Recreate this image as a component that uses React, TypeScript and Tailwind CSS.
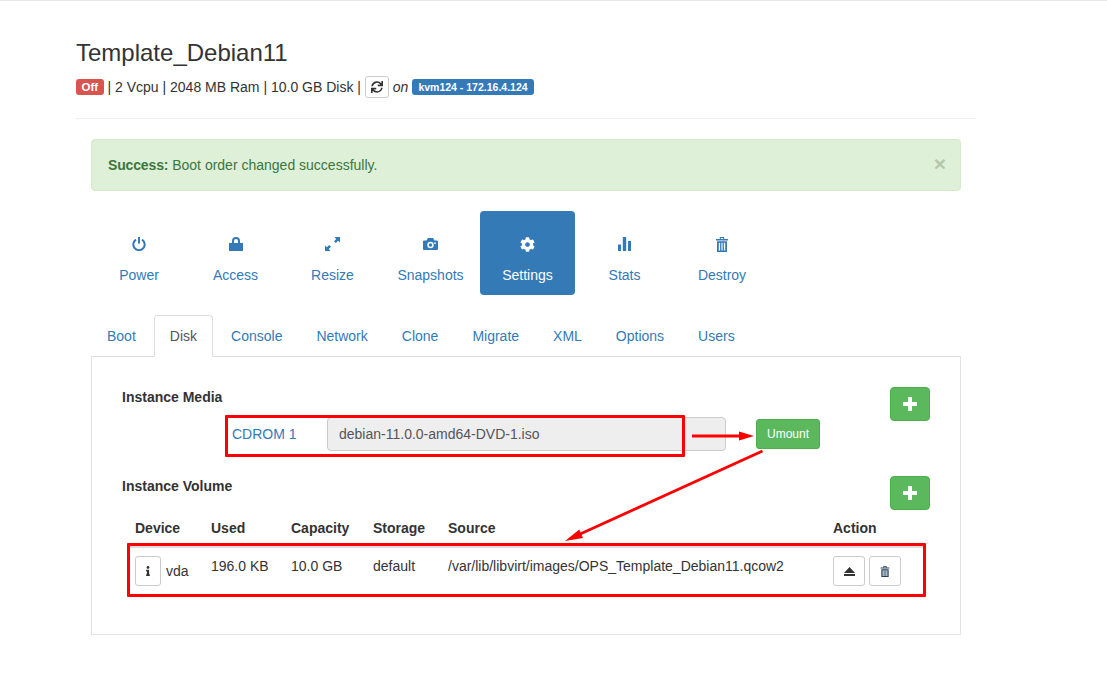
import { FaCog, FaInfo, FaSync } from 'react-icons/fa'
import type { ReactNode } from 'react'

const PowerIcon = () => (
  <svg viewBox="0 0 14 14" className="h-[14px] w-[14px]" fill="none" stroke="currentColor" strokeWidth="2">
    <path d="M4 2.600a5.700 5.700 0 1 0 6 0" />
    <path d="M7 0v6.500" />
  </svg>
)

const LockIcon = () => (
  <svg viewBox="0 0 14 14" className="h-[14px] w-[14px]" fill="currentColor">
    <path d="M0 6h14v8H0z" />
    <path d="M3 6.500V4a4 4 0 0 1 8 0v2.500H9V4a2 2 0 0 0-4 0v2.500z" />
  </svg>
)

const ResizeIcon = () => (
  <svg viewBox="0 0 15 14" className="h-[14px] w-[15px]" fill="currentColor">
    <path d="M9.500 0H15V5.500L13.100 3.700 10.800 6 9 4.200 11.300 1.900z" />
    <path d="M0 14V8.500L1.900 10.300 4.200 8 6 9.800 3.700 12.100 5.500 14z" />
  </svg>
)

const CameraIcon = () => (
  <svg viewBox="0 0 15 12" className="h-[12px] w-[15px]" fill="currentColor">
    <path
      fillRule="evenodd"
      d="M1 2.500H3.500L5 0H10L11.500 2.500H14A1 1 0 0 1 15 3.500V11A1 1 0 0 1 14 12H1A1 1 0 0 1 0 11V3.500A1 1 0 0 1 1 2.500zM7.500 3.800a3.200 3.200 0 1 0 0 6.400 3.200 3.200 0 0 0 0-6.400zM12 4.300a.9.9 0 1 0 0 1.800.9.9 0 0 0 0-1.800z"
    />
    <circle cx="7.500" cy="7" r="1.700" />
  </svg>
)

const StatsIcon = () => (
  <svg viewBox="0 0 13 14" className="h-[14px] w-[13px]" fill="currentColor">
    <path d="M0 7.500h3V14H0zM4.800 0h3.400v14H4.800zM10 4h3v10h-3z" />
  </svg>
)

const TrashIcon = ({ className }: { className: string }) => (
  <svg viewBox="0 0 12 15" className={className} fill="currentColor">
    <path fillRule="evenodd" d="M0 2h12v1.500H0zM3.800 2V0h4.400v2H7.200V1H4.800v1zM1 4.300H11V15H1zM2.800 5.800V13.500H4.100V5.800zM5.400 5.800V13.500H6.600V5.800zM7.900 5.800V13.500H9.200V5.800z" />
  </svg>
)

const EjectIcon = () => (
  <svg viewBox="0 0 11 9" className="h-[9px] w-[11px]" fill="currentColor">
    <path d="M5.500 0L11 6H0zM0 7h11v2H0z" />
  </svg>
)

const PlusIcon = () => (
  <svg viewBox="0 0 14 14" className="h-[14px] w-[14px]" fill="currentColor">
    <path d="M5 0h4v5h5v4H9v5H5V9H0V5h5z" />
  </svg>
)

const pills: { label: string; width: string; icon: ReactNode; active?: boolean }[] = [
  { label: 'Power', width: 'w-[96px]', icon: <PowerIcon /> },
  { label: 'Access', width: 'w-[97px]', icon: <LockIcon /> },
  { label: 'Resize', width: 'w-[97px]', icon: <ResizeIcon /> },
  { label: 'Snapshots', width: 'w-[99px]', icon: <CameraIcon /> },
  { label: 'Settings', width: 'w-[95px]', icon: <FaCog size={15} />, active: true },
  { label: 'Stats', width: 'w-[99px]', icon: <StatsIcon /> },
  { label: 'Destroy', width: 'w-[96px]', icon: <TrashIcon className="h-[15px] w-[12px]" /> },
]

const tabs = ['Boot', 'Disk', 'Console', 'Network', 'Clone', 'Migrate', 'XML', 'Options', 'Users']

const AddButton = () => (
  <button className="flex h-[34px] w-[40px] items-center justify-center rounded-[4px] border border-[#4cae4c] bg-[#5cb85c] text-white">
    <PlusIcon />
  </button>
)

const IconButton = ({ className, children }: { className: string; children: ReactNode }) => (
  <button className={`flex h-[30px] items-center justify-center rounded-[3px] border border-[#ccc] bg-white ${className}`}>
    {children}
  </button>
)

export default function App() {
  return (
    <div className="relative h-[685px] w-[1107px] overflow-hidden border-t border-[#e7e7e7] bg-white font-['Liberation_Sans',Arial,sans-serif] text-[14px] leading-[20px] text-[#333]">
      <div className="ml-[76px] w-[900px] pt-[39px]">
        <h2 className="text-[24px] leading-[26px] font-normal">Template_Debian11</h2>

        <div className="mt-[9px] flex h-[24px] items-center whitespace-pre">
          <span className="rounded-[3px] bg-[#d9534f] px-[5.500px] pt-[1px] text-[11.500px] leading-[15px] font-bold text-white">Off</span>
          <span> | 2 Vcpu | 2048 MB Ram | 10.0 GB Disk | </span>
          <button className="flex h-[22px] w-[24px] items-center justify-center rounded-[3px] border border-[#ccc] bg-white">
            <FaSync size={12} />
          </button>
          <em className="ml-[4px]">on</em>
          <span className="ml-[4px] rounded-[3px] bg-[#337ab7] px-[6px] pt-[1px] text-[10.500px] leading-[15px] font-bold text-white">kvm124 - 172.16.4.124</span>
        </div>

        <hr className="mt-[19px] border-[#eee]" />

        <div className="mt-[20px] ml-[15px] flex h-[52px] w-[870px] items-center justify-between rounded-[4px] border border-[#d6e9c6] bg-[#dff0d8] pr-[14px] pl-[16px] text-[#3c763d]">
          <span><strong className="tracking-[-0.150px]">Success:</strong> Boot order changed successfully.</span>
          <span className="-mt-[4px] text-[21px] leading-none font-bold text-[#b4c7ab]">×</span>
        </div>

        <div className="mt-[20px] ml-[15px] flex">
          {pills.map((pill) => (
            <div
              key={pill.label}
              className={`flex h-[84px] flex-col items-center rounded-[4px] pt-[26px] ${pill.width} ${pill.active ? 'bg-[#337ab7] text-white' : 'text-[#337ab7]'}`}
            >
              <span className="flex h-[14px] items-center">{pill.icon}</span>
              <span className="mt-[14px]">{pill.label}</span>
            </div>
          ))}
        </div>

        <div className="mt-[20px] ml-[15px] w-[870px]">
          <div className="flex">
            {tabs.map((tab) => (
              <div
                key={tab}
                className={`mr-[2px] -mb-px h-[42px] rounded-t-[4px] border px-[15px] py-[10px] ${tab === 'Disk' ? 'border-[#ddd] border-b-white bg-white text-[#555]' : 'border-transparent text-[#337ab7]'}`}
              >
                {tab}
              </div>
            ))}
          </div>

          <div className="h-[279px] border border-[#e3e3e3] border-t-[#ddd] px-[30px] pt-[30px]">
            <div className="flex h-[34px] items-start justify-between">
              <h3 className="font-bold">Instance Media</h3>
              <AddButton />
            </div>
            <div className="-mt-[4px] flex h-[34px] items-center pl-[110px]">
              <span className="w-[95px] text-[#337ab7]">CDROM 1</span>
              <div className="flex h-[34px] w-[399px] items-center rounded-[4px] border border-[#ccc] bg-[#eee] px-[11px] text-[#555]">debian-11.0.0-amd64-DVD-1.iso</div>
              <button className="ml-[30px] h-[30px] w-[64px] rounded-[3px] border border-[#4cae4c] bg-[#5cb85c] text-[12px] text-white">Umount</button>
            </div>

            <div className="mt-[25px] flex h-[34px] items-start justify-between">
              <h3 className="font-bold">Instance Volume</h3>
              <AddButton />
            </div>

            <table className="mt-[8px] ml-[5px] w-[798px] table-fixed border-collapse text-left">
              <colgroup>
                <col className="w-[76px]" />
                <col className="w-[80px]" />
                <col className="w-[82px]" />
                <col className="w-[75px]" />
                <col className="w-[385px]" />
                <col />
              </colgroup>
              <thead>
                <tr className="border-b-2 border-[#ddd]">
                  <th className="pb-[8px] pl-[8px]">Device</th>
                  <th className="pb-[8px] pl-[8px]">Used</th>
                  <th className="pb-[8px] pl-[8px]">Capacity</th>
                  <th className="pb-[8px] pl-[8px]">Storage</th>
                  <th className="pb-[8px] pl-[8px]">Source</th>
                  <th className="pb-[8px] pl-[8px]">Action</th>
                </tr>
              </thead>
              <tbody>
                <tr className="align-top">
                  <td className="pt-[8px] pl-[8px]">
                    <div className="flex items-center gap-[5px]">
                      <IconButton className="w-[26px]"><FaInfo size={10} /></IconButton>
                      vda
                    </div>
                  </td>
                  <td className="pt-[8px] pl-[8px]">196.0 KB</td>
                  <td className="pt-[8px] pl-[8px]">10.0 GB</td>
                  <td className="pt-[8px] pl-[8px]">default</td>
                  <td className="pt-[8px] pl-[8px] whitespace-nowrap">/var/lib/libvirt/images/OPS_Template_Debian11.qcow2</td>
                  <td className="pt-[8px] pl-[8px]">
                    <div className="flex gap-[4px]">
                      <IconButton className="w-[32px]"><EjectIcon /></IconButton>
                      <IconButton className="w-[32px] text-[#24405e]"><TrashIcon className="h-[11px] w-[10px]" /></IconButton>
                    </div>
                  </td>
                </tr>
              </tbody>
            </table>
          </div>
        </div>
      </div>

      {/* annotations drawn on top of the screenshot */}
      <div className="absolute top-[414px] left-[225px] h-[42px] w-[460px] rounded-[1px] border-[3px] border-[#f00]" />
      <div className="absolute top-[542px] left-[127px] h-[54px] w-[799px] rounded-[1px] border-[3px] border-[#f00]" />
      <svg className="absolute -top-px left-0" width="1107" height="685" fill="#f00" stroke="#f00">
        <line x1="692" y1="436" x2="742" y2="436" strokeWidth="3" />
        <path d="M739 431.500L754 436L739 440.500z" stroke="none" />
        <line x1="762.500" y1="451" x2="578" y2="535" strokeWidth="2.800" />
        <path d="M565 541L579.300 529.500L583 538z" stroke="none" />
      </svg>
    </div>
  )
}
